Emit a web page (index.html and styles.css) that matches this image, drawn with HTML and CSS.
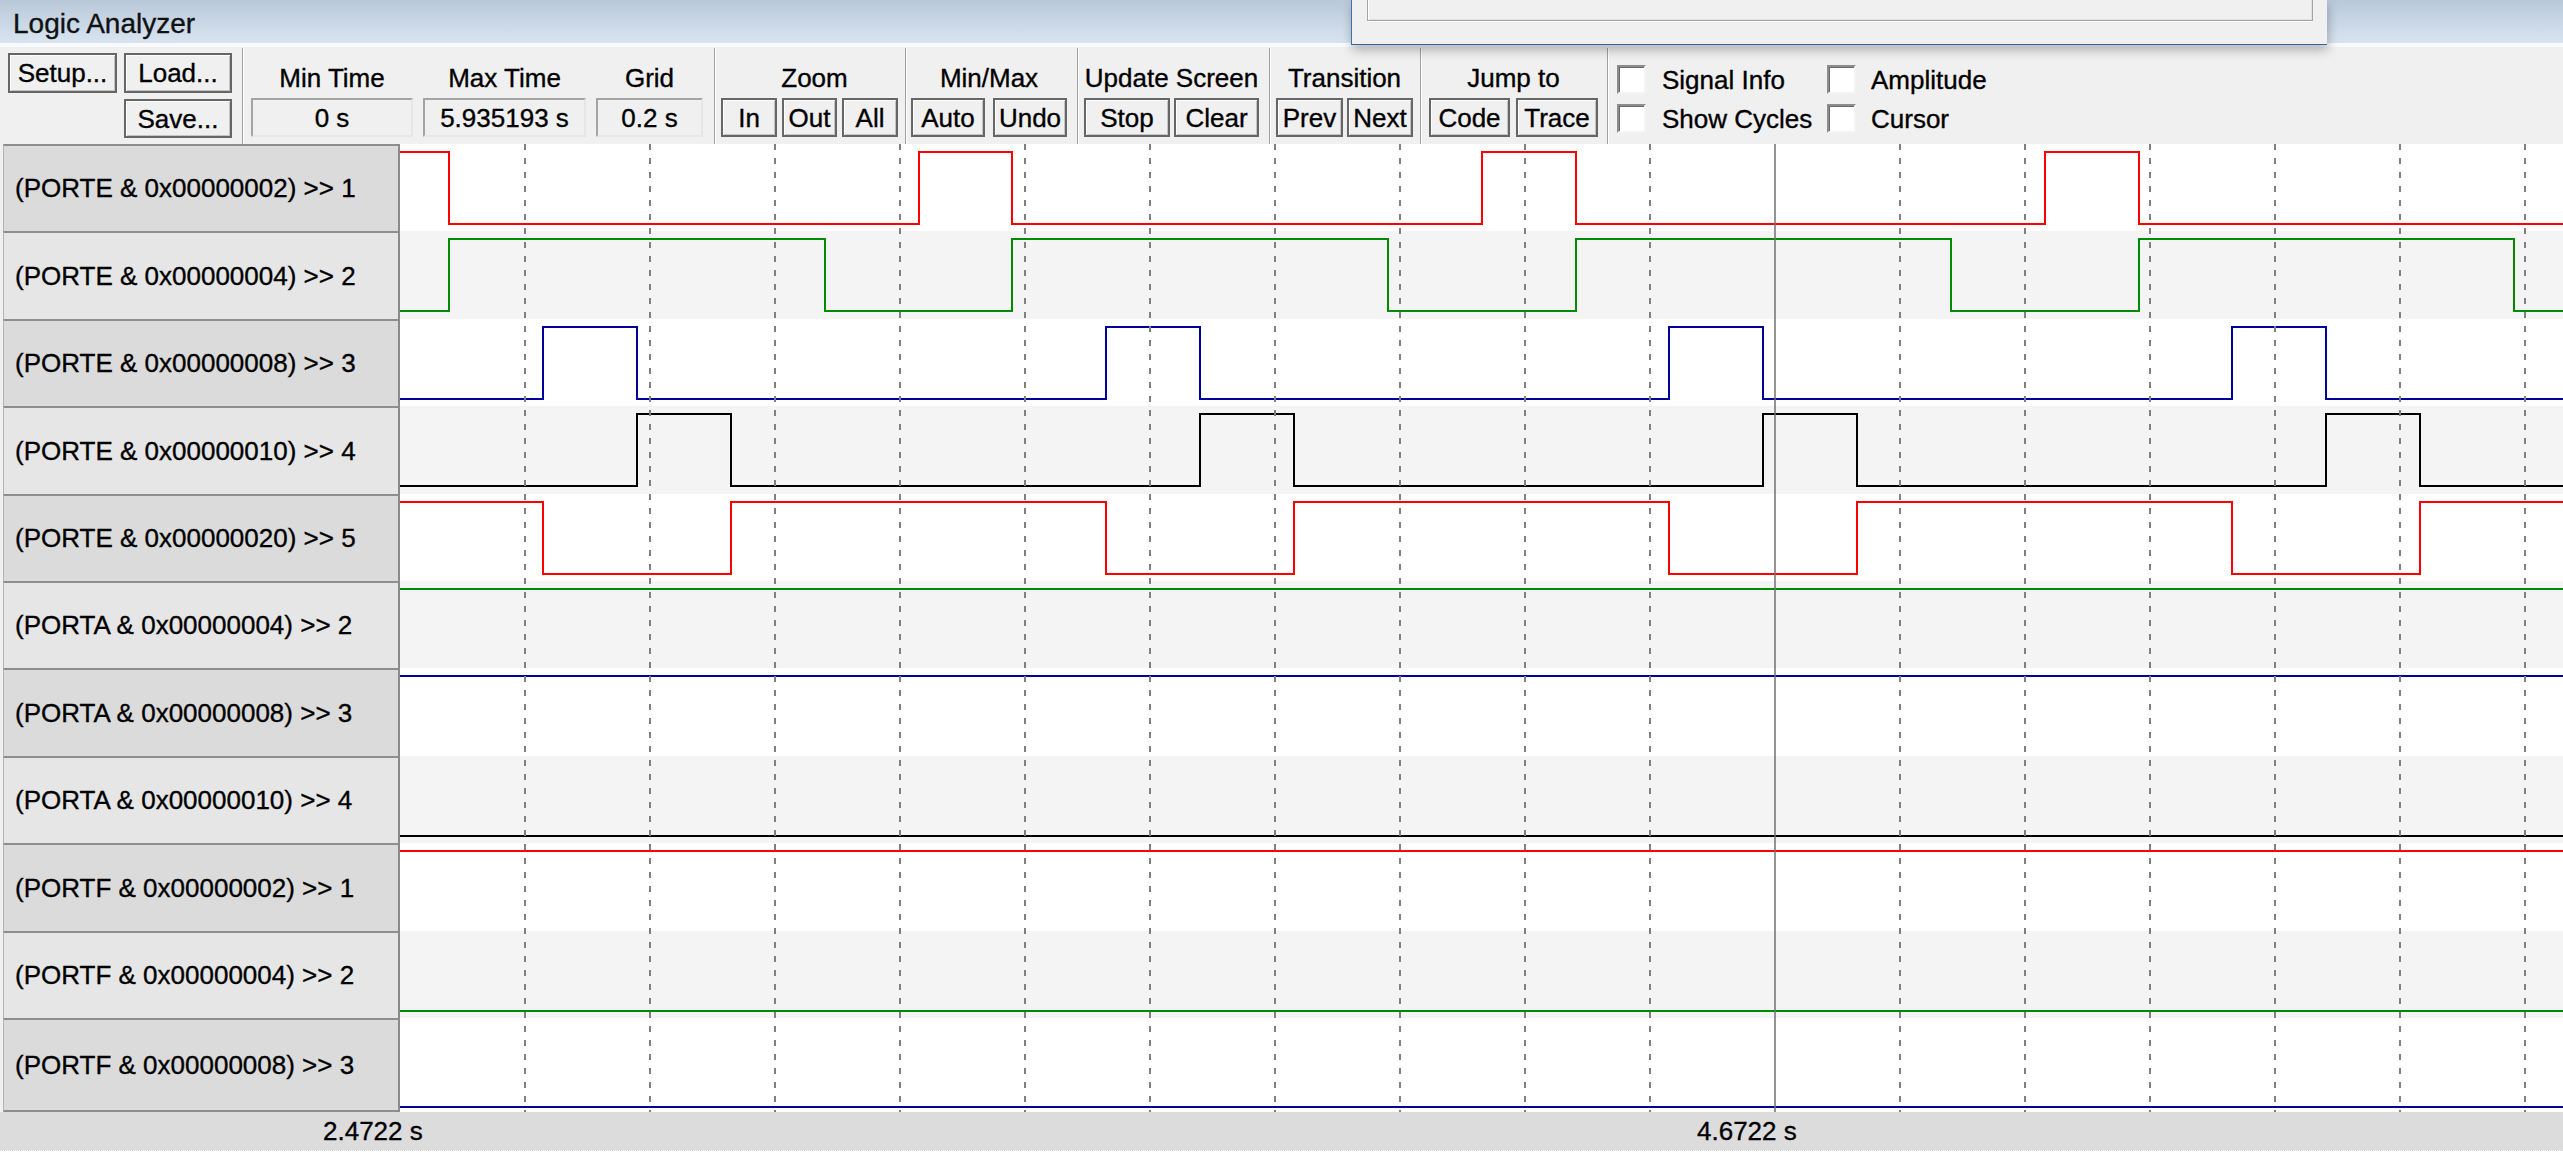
FILE: index.html
```html
<!DOCTYPE html>
<html lang="en">
<head>
<meta charset="utf-8">
<title>Logic Analyzer</title>
<link rel="stylesheet" href="styles.css">
</head>
<body>
<div class="app">
  <header class="titlebar">
    <span class="title">Logic Analyzer</span>
    <div class="popup"><div class="popup-box"></div></div>
  </header>

  <div class="toolbar">
    <div class="grp-file">
      <div class="btn">Setup...</div>
      <div class="btn">Load...</div>
      <div class="btn btn-save">Save...</div>
    </div>
    <div class="sep"></div>
    <div class="grp grp-time">
      <div class="field w-min"><div class="glabel">Min Time</div><div class="value">0 s</div></div>
      <div class="field w-max"><div class="glabel">Max Time</div><div class="value">5.935193 s</div></div>
      <div class="field w-grid"><div class="glabel">Grid</div><div class="value">0.2 s</div></div>
    </div>
    <div class="sep"></div>
    <div class="grp grp-zoom">
      <div class="glabel lbl-zoom">Zoom</div>
      <div class="brow">
        <div class="btn w56">In</div>
        <div class="btn w55">Out</div>
        <div class="btn w56">All</div>
      </div>
    </div>
    <div class="sep"></div>
    <div class="grp grp-minmax">
      <div class="glabel">Min/Max</div>
      <div class="brow">
        <div class="btn w74">Auto</div>
        <div class="btn w74">Undo</div>
      </div>
    </div>
    <div class="sep"></div>
    <div class="grp grp-update">
      <div class="glabel">Update Screen</div>
      <div class="brow">
        <div class="btn w86">Stop</div>
        <div class="btn w85">Clear</div>
      </div>
    </div>
    <div class="sep"></div>
    <div class="grp grp-trans">
      <div class="glabel">Transition</div>
      <div class="brow">
        <div class="btn w67">Prev</div>
        <div class="btn w66">Next</div>
      </div>
    </div>
    <div class="sep"></div>
    <div class="grp grp-jump">
      <div class="glabel">Jump to</div>
      <div class="brow">
        <div class="btn w81">Code</div>
        <div class="btn w82">Trace</div>
      </div>
    </div>
    <div class="sep"></div>
    <div class="grp-checks">
      <label class="chk"><span class="box"></span>Signal Info</label>
      <label class="chk chk2"><span class="box"></span>Amplitude</label>
      <label class="chk"><span class="box"></span>Show Cycles</label>
      <label class="chk chk2"><span class="box"></span>Cursor</label>
    </div>
  </div>

  <div class="main">
    <div class="labels">
      <div class="label">(PORTE &amp; 0x00000002) &gt;&gt; 1</div>
      <div class="label">(PORTE &amp; 0x00000004) &gt;&gt; 2</div>
      <div class="label">(PORTE &amp; 0x00000008) &gt;&gt; 3</div>
      <div class="label">(PORTE &amp; 0x00000010) &gt;&gt; 4</div>
      <div class="label">(PORTE &amp; 0x00000020) &gt;&gt; 5</div>
      <div class="label">(PORTA &amp; 0x00000004) &gt;&gt; 2</div>
      <div class="label">(PORTA &amp; 0x00000008) &gt;&gt; 3</div>
      <div class="label">(PORTA &amp; 0x00000010) &gt;&gt; 4</div>
      <div class="label">(PORTF &amp; 0x00000002) &gt;&gt; 1</div>
      <div class="label">(PORTF &amp; 0x00000004) &gt;&gt; 2</div>
      <div class="label">(PORTF &amp; 0x00000008) &gt;&gt; 3</div>
    </div>
    <div class="waves">
      <div class="wrow"><svg class="sig" width="2163" height="88" viewBox="0 0 2163 88"><path class="s-red" d="M0 8H49V80H519V8H612V80H1082V8H1176V80H1645V8H1739V80H2163"/></svg></div>
      <div class="wrow"><svg class="sig" width="2163" height="88" viewBox="0 0 2163 88"><path class="s-green" d="M0 80H49V8H425V80H612V8H988V80H1176V8H1551V80H1739V8H2114V80H2163"/></svg></div>
      <div class="wrow"><svg class="sig" width="2163" height="88" viewBox="0 0 2163 88"><path class="s-blue" d="M0 80H143V8H237V80H706V8H800V80H1269V8H1363V80H1832V8H1926V80H2163"/></svg></div>
      <div class="wrow"><svg class="sig" width="2163" height="88" viewBox="0 0 2163 88"><path class="s-black" d="M0 80H237V8H331V80H800V8H894V80H1363V8H1457V80H1926V8H2020V80H2163"/></svg></div>
      <div class="wrow"><svg class="sig" width="2163" height="88" viewBox="0 0 2163 88"><path class="s-red" d="M0 8H143V80H331V8H706V80H894V8H1269V80H1457V8H1832V80H2020V8H2163"/></svg></div>
      <div class="wrow"><svg class="sig" width="2163" height="88" viewBox="0 0 2163 88"><path class="s-green" d="M0 8H2163"/></svg></div>
      <div class="wrow"><svg class="sig" width="2163" height="88" viewBox="0 0 2163 88"><path class="s-blue" d="M0 8H2163"/></svg></div>
      <div class="wrow"><svg class="sig" width="2163" height="88" viewBox="0 0 2163 88"><path class="s-black" d="M0 80H2163"/></svg></div>
      <div class="wrow"><svg class="sig" width="2163" height="88" viewBox="0 0 2163 88"><path class="s-red" d="M0 8H2163"/></svg></div>
      <div class="wrow"><svg class="sig" width="2163" height="88" viewBox="0 0 2163 88"><path class="s-green" d="M0 80H2163"/></svg></div>
      <div class="wrow"><svg class="sig" width="2163" height="94" viewBox="0 0 2163 94"><path class="s-blue" d="M0 89H2163"/></svg></div>
      <svg class="grid" width="2163" height="968" viewBox="0 0 2163 968">
        <g class="dash">
          <line x1="125" y1="0" x2="125" y2="968"/>
          <line x1="250" y1="0" x2="250" y2="968"/>
          <line x1="375" y1="0" x2="375" y2="968"/>
          <line x1="500" y1="0" x2="500" y2="968"/>
          <line x1="625" y1="0" x2="625" y2="968"/>
          <line x1="750" y1="0" x2="750" y2="968"/>
          <line x1="875" y1="0" x2="875" y2="968"/>
          <line x1="1000" y1="0" x2="1000" y2="968"/>
          <line x1="1125" y1="0" x2="1125" y2="968"/>
          <line x1="1250" y1="0" x2="1250" y2="968"/>
          <line x1="1500" y1="0" x2="1500" y2="968"/>
          <line x1="1625" y1="0" x2="1625" y2="968"/>
          <line x1="1750" y1="0" x2="1750" y2="968"/>
          <line x1="1875" y1="0" x2="1875" y2="968"/>
          <line x1="2000" y1="0" x2="2000" y2="968"/>
          <line x1="2125" y1="0" x2="2125" y2="968"/>
        </g>
        <line class="cursor" x1="1375" y1="0" x2="1375" y2="968"/>
      </svg>
    </div>
  </div>

  <div class="axis">
    <span class="tlabel" style="left:323px">2.4722 s</span>
    <span class="tlabel" style="left:1697px">4.6722 s</span>
  </div>
  <div class="status"></div>
</div>
</body>
</html>
```

FILE: styles.css
```css
* { box-sizing: border-box; }
html, body { margin: 0; padding: 0; }
body {
  width: 2563px;
  height: 1154px;
  overflow: hidden;
  background: #f0f0f0;
  font-family: "Liberation Sans", Arial, sans-serif;
  color: #000;
  -webkit-text-stroke: 0.35px currentColor;
}
.app { width: 2563px; height: 1154px; }

/* title bar */
.titlebar {
  position: relative;
  height: 47px;
  background: linear-gradient(to bottom, #b9c8d9, #d8e4f0);
  border-bottom: 4px solid #f8fafc;
}
.title {
  display: block;
  font-size: 28px;
  line-height: 41px;
  padding: 3px 0 0 13px;
  color: #111;
}
.popup {
  position: absolute;
  left: 1351px;
  top: 0;
  width: 976px;
  height: 45px;
  background: #f0f0f0;
  border-left: 1px solid #3d72aa;
  border-bottom: 1px solid #2e67a3;
  box-shadow: 1px 5px 10px rgba(0, 0, 0, 0.28);
  padding: 0 14px 0 15px;
  z-index: 2;
}
.popup-box {
  height: 21px;
  border: 1px solid #a3a3a3;
  border-top: 0;
  box-shadow: 0 1px 0 #ffffff, inset 1px 0 0 #ffffff, inset -1px -1px 0 #e2e2e2;
}

/* toolbar */
.toolbar {
  display: flex;
  height: 97px;
  font-size: 26px;
}
.sep {
  width: 2px;
  margin-top: 1px;
  border-left: 1px solid #a0a0a0;
  border-right: 1px solid #ffffff;
}
.grp { display: flex; flex-direction: column; }
.glabel {
  margin-top: 12px;
  height: 38px;
  line-height: 38px;
  margin-bottom: 1px;
  text-align: center;
  white-space: nowrap;
}
.brow { display: flex; }
.btn {
  height: 39px;
  background: #f0f0f0;
  border: 2px solid #666666;
  box-shadow: inset 1px 1px 0 #ffffff, inset -1px -1px 0 #c4c4c4;
  padding-top: 2px;
  line-height: 33px;
  text-align: center;
  white-space: nowrap;
}
.value {
  height: 39px;
  border: 2px solid;
  border-color: #a4a4a4 #e6e6e6 #e6e6e6 #a4a4a4;
  padding-top: 2px;
  line-height: 33px;
  text-align: center;
  white-space: nowrap;
}

.grp-file {
  display: grid;
  grid-template-columns: 109px 108px;
  grid-template-rows: 40px 39px;
  column-gap: 7px;
  row-gap: 6px;
  padding: 6px 10px 0 8px;
}
.grp-file .btn { height: auto; }
.btn-save { grid-column: 2; grid-row: 2; }

.grp-time { flex-direction: row; gap: 10px; padding: 0 11px 0 7px; }
.field { display: flex; flex-direction: column; }
.w-min { width: 162px; }
.w-max { width: 163px; }
.w-grid { width: 107px; }

.grp-zoom { padding: 0 7px 0 5px; }
.grp-zoom .brow { gap: 5px; }
.lbl-zoom { padding-left: 10px; }
.w56 { width: 56px; }
.w55 { width: 55px; }

.grp-minmax { padding: 0 10px 0 4px; }
.grp-minmax .brow { gap: 8px; }
.w74 { width: 74px; }

.grp-update { padding: 0 10px 0 5px; }
.grp-update .brow { gap: 4px; }
.w86 { width: 86px; }
.w85 { width: 85px; }

.grp-trans { padding: 0 7px 0 5px; }
.grp-trans .brow { gap: 4px; }
.w67 { width: 67px; }
.w66 { width: 66px; }

.grp-jump { padding: 0 9px 0 7px; }
.grp-jump .brow { gap: 6px; }
.w81 { width: 81px; }
.w82 { width: 82px; }

.grp-checks {
  display: grid;
  grid-template-columns: 210px auto;
  grid-auto-rows: 29px;
  row-gap: 10px;
  padding: 18px 0 0 8px;
}
.chk {
  display: flex;
  align-items: center;
  gap: 16px;
  white-space: nowrap;
  padding-top: 2px;
}
.chk .box { margin-top: -2px; }
.chk2 { gap: 15px; }
.box {
  width: 29px;
  height: 29px;
  flex: none;
  background: #ffffff;
  border: 2px solid;
  border-color: #8c8c8c #f4f4f4 #f4f4f4 #8c8c8c;
  box-shadow: inset 1px 1px 0 #6a6a6a;
}

/* signal area */
.main { display: flex; height: 968px; }
.labels {
  width: 400px;
  flex: none;
  padding-left: 3px;
}
.label {
  height: 87px;
  display: flex;
  align-items: center;
  padding-left: 11px;
  font-size: 26px;
  white-space: nowrap;
  background: #dbdbdb;
  border-top: 2px solid #8e8e8e;
  border-right: 2px solid #8a8a8a;
  border-left: 1px solid #b4b4b4;
}
.label:nth-child(even) { background: #e6e6e6; }
.label:nth-child(2), .label:nth-child(4), .label:nth-child(7), .label:nth-child(9) { height: 88px; }
.label:last-child { height: 94px; border-bottom: 2px solid #8e8e8e; }

.waves { position: relative; width: 2163px; }
.wrow { height: 87px; background: #ffffff; }
.wrow:nth-child(even) { background: #f4f4f4; }
.wrow:nth-child(2), .wrow:nth-child(4), .wrow:nth-child(7), .wrow:nth-child(9) { height: 88px; }
.wrow:nth-child(11) { height: 94px; }
.sig { display: block; overflow: visible; }
.sig path { fill: none; stroke-width: 2; stroke-linejoin: miter; }
.s-red { stroke: #ff0000; }
.s-green { stroke: #008a00; }
.s-blue { stroke: #00009c; }
.s-black { stroke: #000000; }

.grid { position: absolute; left: 0; top: 0; pointer-events: none; }
.dash line { stroke: #808080; stroke-width: 2; stroke-dasharray: 6 8; }
.cursor { stroke: #707070; stroke-width: 1.5; }

/* time axis */
.axis {
  position: relative;
  height: 38px;
  background: #dcdcdc;
  font-size: 26px;
}
.tlabel {
  position: absolute;
  top: 0;
  line-height: 38px;
  white-space: nowrap;
}
.status {
  height: 4px;
  background: #ffffff;
  border-top: 1px dotted #cfcfcf;
}
```
